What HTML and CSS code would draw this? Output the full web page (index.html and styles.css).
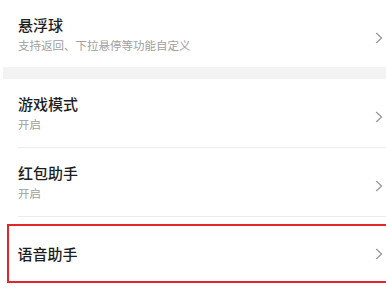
FILE: index.html
```html
<!DOCTYPE html>
<html lang="zh-CN">
<head>
<meta charset="utf-8">
<link rel="stylesheet" href="styles.css">
</head>
<body>
<div class="list">
  <div class="item item-first">
    <div class="text">
      <div class="title">悬浮球</div>
      <div class="sub">支持返回、下拉悬停等功能自定义</div>
    </div>
    <svg class="chev" width="8" height="12" viewBox="0 0 8 12"><polyline points="1.2,1 6.5,6 1.2,11" fill="none" stroke="#9c9c9c" stroke-width="1.4"/></svg>
  </div>
  <div class="band"></div>
  <div class="item">
    <div class="text">
      <div class="title">游戏模式</div>
      <div class="sub">开启</div>
    </div>
    <svg class="chev" width="8" height="12" viewBox="0 0 8 12"><polyline points="1.2,1 6.5,6 1.2,11" fill="none" stroke="#9c9c9c" stroke-width="1.4"/></svg>
  </div>
  <div class="sep"></div>
  <div class="item">
    <div class="text">
      <div class="title">红包助手</div>
      <div class="sub">开启</div>
    </div>
    <svg class="chev" width="8" height="12" viewBox="0 0 8 12"><polyline points="1.2,1 6.5,6 1.2,11" fill="none" stroke="#9c9c9c" stroke-width="1.4"/></svg>
  </div>
  <div class="sep"></div>
  <div class="highlight">
    <div class="title">语音助手</div>
    <svg class="chev" width="8" height="12" viewBox="0 0 8 12"><polyline points="1.2,1 6.5,6 1.2,11" fill="none" stroke="#9c9c9c" stroke-width="1.4"/></svg>
  </div>
</div>
</body>
</html>
```

FILE: styles.css
```css
html, body {
  margin: 0;
  padding: 0;
  background: #ffffff;
  overflow: hidden;
}
body {
  width: 386px;
  height: 301px;
  font-family: "Noto Sans CJK SC", "Noto Sans", sans-serif;
}
.list {
  display: flex;
  flex-direction: column;
}
.item {
  height: 68px;
  box-sizing: border-box;
  display: flex;
  align-items: center;
  justify-content: space-between;
  padding: 0 3px 0 18px;
}
.item-first {
  height: 67px;
}
.text {
  display: flex;
  flex-direction: column;
}
.title {
  font-size: 15px;
  line-height: 20px;
  font-weight: 500;
  color: #1e1e1e;
}
.sub {
  margin-top: 2px;
  font-size: 11.5px;
  line-height: 16px;
  color: #a0a0a0;
}
.chev {
  display: block;
  margin-top: 8px;
}
.band {
  height: 12px;
  margin-left: 3px;
  background: #f3f3f3;
}
.sep {
  height: 1px;
  margin-left: 18px;
  background: #ececec;
}
.highlight {
  margin: 7px 0 0 7px;
  height: 59px;
  box-sizing: border-box;
  border: 2.5px solid #e2262c;
  border-right: none;
  display: flex;
  align-items: center;
  justify-content: space-between;
  padding: 0 3px 0 8.5px;
}
.highlight .chev {
  margin-top: 0;
}
```
